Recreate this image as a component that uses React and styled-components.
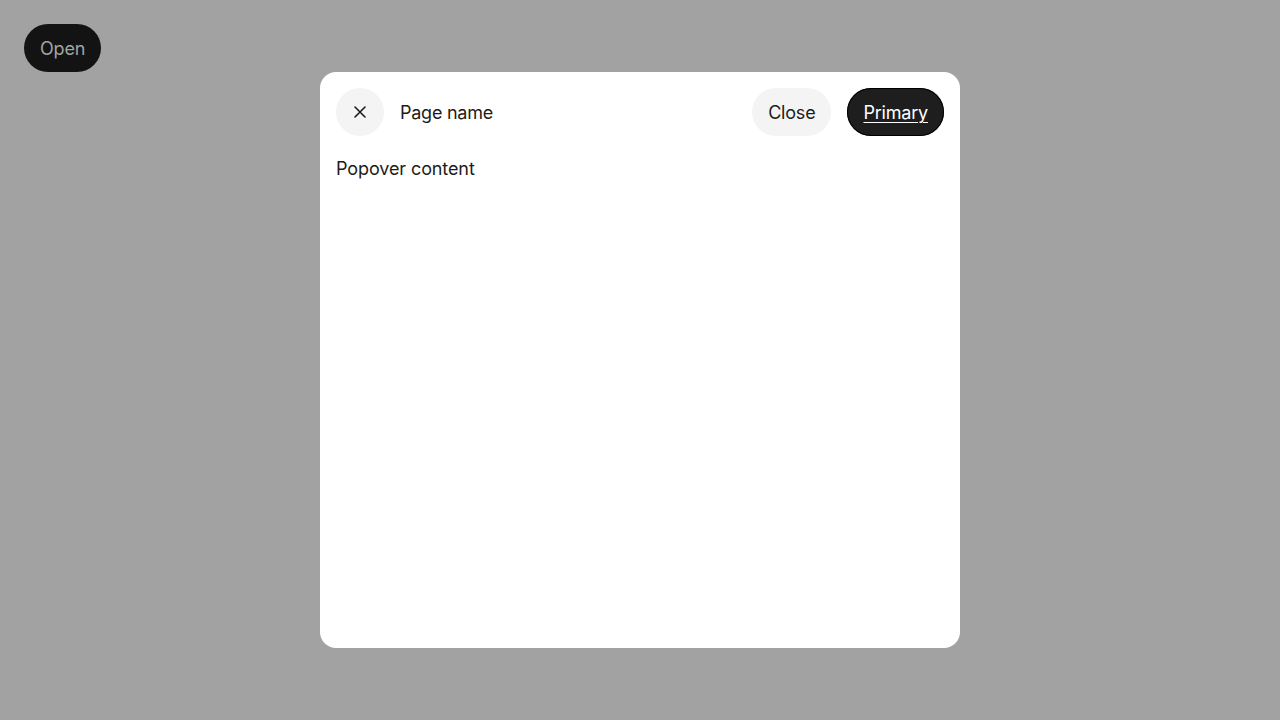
import React from 'react'
import styled, { createGlobalStyle } from 'styled-components'

const Global = createGlobalStyle`
  html, body {
    margin: 0;
    padding: 0;
    height: 100%;
    background: #a2a2a2;
    font-family: Inter, "Noto Sans", sans-serif;
  }
`

const Page = styled.div`
  position: relative;
  width: 1280px;
  height: 720px;
  padding: 24px;
  box-sizing: border-box;
`

const OpenButton = styled.button`
  height: 48px;
  padding: 0 16px;
  border: none;
  border-radius: 24px;
  background: #131313;
  color: #a3a3a3;
  font-family: inherit;
  font-size: 18px;
  letter-spacing: -0.15px;
  cursor: pointer;
`

const Overlay = styled.div`
  position: absolute;
  inset: 0;
  display: flex;
  justify-content: center;
  padding-top: 72px;
`

const Dialog = styled.div`
  width: 640px;
  height: 576px;
  box-sizing: border-box;
  padding: 16px;
  background: #fff;
  border-radius: 16px;
  display: flex;
  flex-direction: column;
  gap: 22px;
`

const Header = styled.div`
  display: flex;
  align-items: center;
  gap: 16px;
`

const Title = styled.div`
  flex: 1;
  font-size: 18px;
  letter-spacing: -0.25px;
  color: #1c1c1c;
`

const IconButton = styled.button`
  width: 48px;
  height: 48px;
  border: none;
  border-radius: 50%;
  background: #f4f4f4;
  display: flex;
  align-items: center;
  justify-content: center;
  color: #1c1c1c;
  padding: 0;
`

const Button = styled.button`
  height: 48px;
  padding: 0 16px;
  border: none;
  border-radius: 24px;
  font-family: inherit;
  font-size: 18px;
  letter-spacing: -0.2px;
  box-shadow: ${p => (p.$primary ? 'inset 0 0 0 1px #000' : 'none')};
  background: ${p => (p.$primary ? '#1e1e1e' : '#f4f4f4')};
  color: ${p => (p.$primary ? '#fff' : '#1c1c1c')};
  text-decoration: ${p => (p.$primary ? 'underline' : 'none')};
  text-underline-offset: 3px;
  text-decoration-thickness: 1px;
`

const Content = styled.div`
  font-size: 18px;
  letter-spacing: -0.1px;
  color: #1c1c1c;
`

export default function App() {
  return (
    <>
      <Global />
      <Page>
        <OpenButton>Open</OpenButton>
        <Overlay>
          <Dialog>
            <Header>
              <IconButton aria-label="Close">
                <svg width="14" height="14" viewBox="0 0 14 14" fill="none" stroke="currentColor" strokeWidth="1.6" strokeLinecap="round">
                  <path d="M2 2L12 12M12 2L2 12" />
                </svg>
              </IconButton>
              <Title>Page name</Title>
              <Button>Close</Button>
              <Button $primary>Primary</Button>
            </Header>
            <Content>Popover content</Content>
          </Dialog>
        </Overlay>
      </Page>
    </>
  )
}
